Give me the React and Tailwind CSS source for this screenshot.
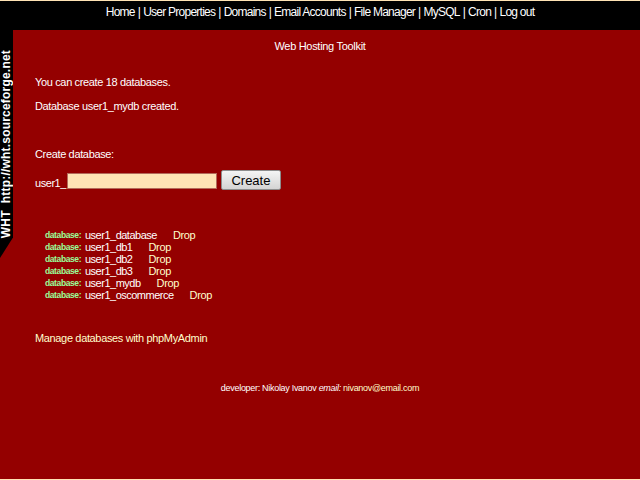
import React from 'react';

const navLinks = ['Home', 'User Properties', 'Domains', 'Email Accounts', 'File Manager', 'MySQL', 'Cron', 'Log out'];

const databases = ['user1_database', 'user1_db1', 'user1_db2', 'user1_db3', 'user1_mydb', 'user1_oscommerce'];

const App = () => {
  return (
    <div className="w-[640px] h-[480px] bg-[#ffe4b5] py-px flex flex-col font-['Liberation_Sans',Arial,sans-serif] text-white overflow-hidden">
      {/* top menu */}
      <div className="h-[29px] shrink-0 bg-black flex justify-center pt-[3px] text-[12px] leading-[16px] tracking-[-0.75px]">
        {navLinks.map((l, i) => (
          <span key={l}>
            {i > 0 && <span className="mx-[3px]">|</span>}
            {l}
          </span>
        ))}
      </div>

      <div className="flex-1 bg-[#940000] relative">
        {/* side tab */}
        <div className="absolute left-0 top-0 w-[13px] h-[228px] bg-black [clip-path:polygon(0_0,100%_0,100%_91%,0_100%)] flex justify-center">
          <span className="[writing-mode:vertical-rl] rotate-180 font-bold text-[12px] leading-[13px] mb-[20px] mt-auto whitespace-pre tracking-[0.2px]">
            {'WHT  http://wht.sourceforge.net'}
          </span>
        </div>

        <div className="text-center text-[11px] tracking-[-0.3px] pt-[9px] leading-[14px]">Web Hosting Toolkit</div>

        <div className="pl-[35px] text-[11px] tracking-[-0.35px] leading-[14px]">
          <p className="mt-[22px]">You can create 18 databases.</p>
          <p className="mt-[10px]">Database user1_mydb created.</p>

          <p className="mt-[34px]">Create database:</p>
          <div className="mt-[9px] flex items-center h-[20px]">
            <span className="mt-[5px] tracking-[-0.45px]">user1_</span>
            <input
              type="text"
              className="ml-px w-[150px] h-[16px] mt-[2px] bg-[#ffe4b5] border border-[#b46a5a] outline-none"
            />
            <button className="ml-[4px] w-[60px] h-[20px] rounded-[2px] border border-[#8d8d8d] bg-gradient-to-b from-[#f4f4f4] to-[#d4d4d4] text-black text-[13px] tracking-normal leading-none">
              Create
            </button>
          </div>

          <div className="mt-[39px] pl-[10px] flex flex-col">
            {databases.map((d) => (
              <div key={d} className="h-[12px] flex items-center">
                <span className="text-[#99ff99] text-[8.5px] font-bold tracking-[-0.4px] w-[40px]">database:</span>
                <span className="tracking-[-0.5px]">{d}</span>
                <span className="ml-[16px] text-[#ffffcc]">Drop</span>
              </div>
            ))}
          </div>

          <p className="mt-[30px] text-[#ffffcc]">Manage databases with phpMyAdmin</p>
        </div>

        <div className="mt-[37px] text-center text-[9px] tracking-[-0.3px]">
          developer: Nikolay Ivanov <i>email:</i> <span className="text-[#ffffcc]">nivanov@email.com</span>
        </div>
      </div>
    </div>
  );
};

export default App;
